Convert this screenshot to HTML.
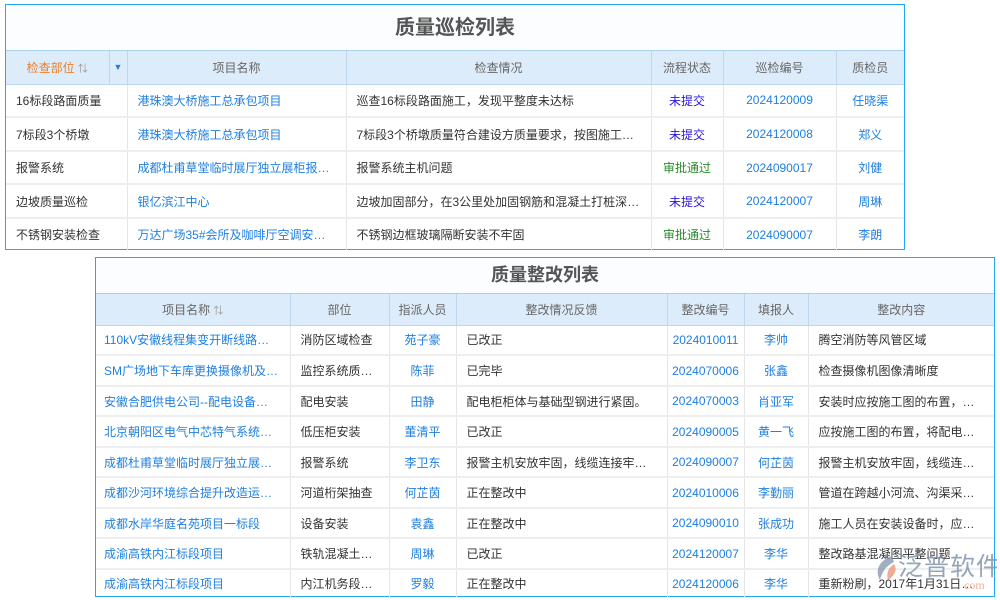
<!DOCTYPE html>
<html style="overflow:hidden;width:1000px;height:600px"><head><meta charset="utf-8">
<style>
*{margin:0;padding:0;box-sizing:border-box}
body{width:1000px;height:600px;background:#fff;font-family:"Liberation Sans","Noto Sans CJK SC",sans-serif;font-size:12px;color:#333;position:relative;overflow:hidden}
.box{position:absolute;border:1px solid #22a8ee;background:#fff}
.title{background:#fbfdff;text-align:center;font-weight:bold;color:#555;border-bottom:1px solid #a9cfee}
table{border-collapse:collapse;table-layout:fixed;width:100%}
th{background:#ddecfa;color:#666;font-weight:normal;border-right:1px solid #bcd8f0;border-bottom:1px solid #bcd8f0}
td{border-right:1px solid #e6e6e6;border-bottom:2px solid #eeeeee;white-space:nowrap;overflow:hidden;text-overflow:ellipsis;padding:0 10px;vertical-align:middle}
th:last-child,td:last-child{border-right:none}
tr:last-child td{border-bottom:none}
.b{color:#1e7fe0}.c{text-align:center;padding:0 3px}.p{color:#2a14d6}.g{color:#2a8a2a}
.o{color:#e8802a}
.wm{position:absolute;left:872px;top:552px;width:125px;height:40px;opacity:.8;overflow:hidden}
</style></head><body>
<div class="box" style="left:5px;top:4px;width:900px;height:246px">
<div class="title" style="height:46px;line-height:46px;font-size:20px">质量巡检列表</div>
<table>
<colgroup><col style="width:103px"><col style="width:18px"><col style="width:219px"><col style="width:305px"><col style="width:72px"><col style="width:113px"><col></colgroup>
<tr style="height:33px"><th class="o" style="border-right:1px solid #bcd8f0">检查部位 <span style="color:#999;font-size:10px">⇅</span></th><th style="color:#2a7fd0;font-size:9px">▼</th><th>项目名称</th><th>检查情况</th><th>流程状态</th><th>巡检编号</th><th>质检员</th></tr>
<tr style="height:33px"><td colspan="2">16标段路面质量</td><td class="b">港珠澳大桥施工总承包项目</td><td>巡查16标段路面施工，发现平整度未达标</td><td class="c p">未提交</td><td class="c b">2024120009</td><td class="c b">任晓渠</td></tr>
<tr style="height:34px"><td colspan="2">7标段3个桥墩</td><td class="b">港珠澳大桥施工总承包项目</td><td>7标段3个桥墩质量符合建设方质量要求，按图施工符合要求</td><td class="c p">未提交</td><td class="c b">2024120008</td><td class="c b">郑义</td></tr>
<tr style="height:33px"><td colspan="2">报警系统</td><td class="b">成都杜甫草堂临时展厅独立展柜报警系统</td><td>报警系统主机问题</td><td class="c g">审批通过</td><td class="c b">2024090017</td><td class="c b">刘健</td></tr>
<tr style="height:34px"><td colspan="2">边坡质量巡检</td><td class="b">银亿滨江中心</td><td>边坡加固部分，在3公里处加固钢筋和混凝土打桩深度不够</td><td class="c p">未提交</td><td class="c b">2024120007</td><td class="c b">周琳</td></tr>
<tr style="height:32px"><td colspan="2">不锈钢安装检查</td><td class="b">万达广场35#会所及咖啡厅空调安装工程</td><td>不锈钢边框玻璃隔断安装不牢固</td><td class="c g">审批通过</td><td class="c b">2024090007</td><td class="c b">李朗</td></tr>
</table></div>

<div class="box" style="left:95px;top:257px;width:900px;height:340px">
<div class="title" style="height:36px;line-height:34px;font-size:18px">质量整改列表</div>
<table>
<colgroup><col style="width:194px"><col style="width:99px"><col style="width:67px"><col style="width:211px"><col style="width:77px"><col style="width:64px"><col></colgroup>
<tr style="height:31px"><th>项目名称 <span style="color:#999;font-size:10px">⇅</span></th><th>部位</th><th>指派人员</th><th>整改情况反馈</th><th>整改编号</th><th>填报人</th><th>整改内容</th></tr>
<tr style="height:30px"><td class="b" style="padding-left:8px">110kV安徽线程集变开断线路工程</td><td>消防区域检查</td><td class="c b">苑子豪</td><td>已改正</td><td class="c b">2024010011</td><td class="c b">李帅</td><td>腾空消防等风管区域</td></tr>
<tr style="height:31px"><td class="b" style="padding-left:8px">SM广场地下车库更换摄像机及硬盘录像机</td><td>监控系统质量检查</td><td class="c b">陈菲</td><td>已完毕</td><td class="c b">2024070006</td><td class="c b">张鑫</td><td>检查摄像机图像清晰度</td></tr>
<tr style="height:30px"><td class="b" style="padding-left:8px">安徽合肥供电公司--配电设备检修工程</td><td>配电安装</td><td class="c b">田静</td><td>配电柜柜体与基础型钢进行紧固。</td><td class="c b">2024070003</td><td class="c b">肖亚军</td><td>安装时应按施工图的布置，将配电柜安装</td></tr>
<tr style="height:31px"><td class="b" style="padding-left:8px">北京朝阳区电气中芯特气系统之G工程</td><td>低压柜安装</td><td class="c b">董清平</td><td>已改正</td><td class="c b">2024090005</td><td class="c b">黄一飞</td><td>应按施工图的布置，将配电柜按顺序安装</td></tr>
<tr style="height:30px"><td class="b" style="padding-left:8px">成都杜甫草堂临时展厅独立展柜报警系统</td><td>报警系统</td><td class="c b">李卫东</td><td>报警主机安放牢固，线缆连接牢靠，报警正常</td><td class="c b">2024090007</td><td class="c b">何芷茵</td><td>报警主机安放牢固，线缆连接牢靠正常</td></tr>
<tr style="height:31px"><td class="b" style="padding-left:8px">成都沙河环境综合提升改造运河护坡工程</td><td>河道桁架抽查</td><td class="c b">何芷茵</td><td>正在整改中</td><td class="c b">2024010006</td><td class="c b">李勤丽</td><td>管道在跨越小河流、沟渠采用桁架方式</td></tr>
<tr style="height:30px"><td class="b" style="padding-left:8px">成都水岸华庭名苑项目一标段</td><td>设备安装</td><td class="c b">袁鑫</td><td>正在整改中</td><td class="c b">2024090010</td><td class="c b">张成功</td><td>施工人员在安装设备时，应该轻拿轻放</td></tr>
<tr style="height:31px"><td class="b" style="padding-left:8px">成渝高铁内江标段项目</td><td>铁轨混凝土施工检查</td><td class="c b">周琳</td><td>已改正</td><td class="c b">2024120007</td><td class="c b">李华</td><td>整改路基混凝图平整问题</td></tr>
<tr style="height:28px"><td class="b" style="padding-left:8px">成渝高铁内江标段项目</td><td>内江机务段房屋检查</td><td class="c b">罗毅</td><td>正在整改中</td><td class="c b">2024120006</td><td class="c b">李华</td><td>重新粉刷，2017年1月31日接收</td></tr>
</table>
</div>
<div class="wm">
<svg width="28" height="30" style="position:absolute;left:0;top:2px"><path d="M20 2 C8 6 2 16 8 26 C10 18 14 12 22 8Z" fill="#8a9bb0"/><path d="M22 10 C16 14 14 20 16 26 C22 22 26 16 22 10Z" fill="#e89a7a"/></svg>
<span style="position:absolute;left:26px;top:-2px;font-size:25px;line-height:30px;color:#7d90a8;font-family:'Noto Sans CJK SC',sans-serif;letter-spacing:1px;white-space:nowrap">泛普软件</span>
<span style="position:absolute;left:92px;top:26px;font-size:12px;line-height:14px;color:#e8a080;font-family:'Liberation Serif',serif">com</span>
</div>
</body></html>
